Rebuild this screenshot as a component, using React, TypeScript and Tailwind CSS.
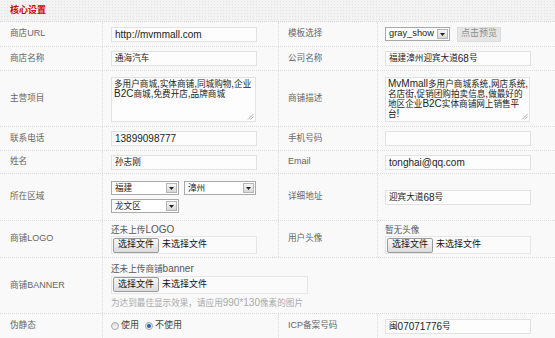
import React from "react";

const CJK = /([\u2000-\u206f\u3000-\u9fff\uff00-\uffef]+)/;

function M({ t }: { t: string }) {
  const parts = t.split(CJK);
  return (
    <>
      {parts.map((p, i) =>
        i % 2 === 1 ? (
          <span key={i} className="text-[8.6px]">
            {p}
          </span>
        ) : (
          <React.Fragment key={i}>{p}</React.Fragment>
        )
      )}
    </>
  );
}

function Label({ t, first }: { t: string; first?: boolean }) {
  return (
    <div
      className={
        "flex items-center text-[9px] text-[#666] " +
        (first ? "pl-[10px]" : "pl-[9px] border-l border-dotted border-[#dedede]")
      }
    >
      <span>
        <M t={t} />
      </span>
    </div>
  );
}

function Cell({ children, right, className }: { children?: React.ReactNode; right?: boolean; className?: string }) {
  return (
    <div
      className={
        "flex border-l border-dotted border-[#dedede] " +
        (right ? "pl-[7px] " : "pl-[8px] ") +
        (className ?? "items-center")
      }
    >
      {children}
    </div>
  );
}

function Input({ v }: { v?: string }) {
  return (
    <div className="flex h-[15px] w-[146px] items-center border border-[#e2e2e2] bg-[#fdfdfd] px-[3px] text-[10px] leading-[13px] text-[#222] whitespace-nowrap">
      {v ? <M t={v} /> : null}
    </div>
  );
}

function Grip() {
  return (
    <svg className="absolute bottom-[1px] right-[1px]" width="7" height="7" viewBox="0 0 7 7">
      <path d="M6.5 1 L1 6.5 M6.5 3.5 L3.5 6.5" stroke="#999" strokeWidth="0.8" />
    </svg>
  );
}

function Area({ lines }: { lines: string[] }) {
  return (
    <div className="relative h-[45px] w-[145px] overflow-hidden border border-[#e2e2e2] bg-[#fdfdfd] px-[2px] pt-[1px] text-[10px] leading-[10px] text-[#222] whitespace-nowrap">
      {lines.map((l, i) => (
        <div key={i}>
          <M t={l} />
        </div>
      ))}
      <Grip />
    </div>
  );
}

function Arrow() {
  return (
    <span className="absolute right-[1px] top-[1px] flex h-[10px] w-[11px] items-center justify-center border border-[#b5b5b5] bg-gradient-to-b from-[#f6f6f6] to-[#d8d8d8]">
      <svg width="5" height="3" viewBox="0 0 5 3">
        <path d="M0 0 H5 L2.5 3 Z" fill="#222" />
      </svg>
    </span>
  );
}

function Sel({ v, w }: { v: string; w: string }) {
  return (
    <div className={"relative flex h-[14px] items-center border border-[#a9a9a9] bg-white pl-[3px] text-[9.3px] text-[#222] whitespace-nowrap " + w}>
      <M t={v} />
      <Arrow />
    </div>
  );
}

function FileBox({ w }: { w: string }) {
  return (
    <div className={"flex h-[18px] items-center border border-[#e6e6e6] bg-[#fbfbfb] pl-[1px] " + w}>
      <span className="flex h-[15px] items-center rounded-[2px] border border-[#9a9a9a] bg-gradient-to-b from-[#f8f8f8] to-[#dcdcdc] px-[4px] text-[9px] text-[#111]">
        选择文件
      </span>
      <span className="ml-[3px] text-[9px] text-[#111]">未选择文件</span>
    </div>
  );
}

function Radio({ on }: { on?: boolean }) {
  return (
    <span className="flex h-[8px] w-[8px] items-center justify-center rounded-full border border-[#a8a8a8] bg-gradient-to-b from-[#dcdcdc] to-[#f8f8f8]">
      {on ? <span className="h-[4px] w-[4px] rounded-full bg-[#1f5fb5]" /> : null}
    </span>
  );
}

const ROW = "grid grid-cols-[102px_176px_99px_178px] border-b border-dotted border-[#dadada]";

export default function App() {
  return (
    <div className="h-[338px] w-[555px] overflow-hidden bg-[#f9f9f9] font-['Liberation_Sans','Noto_Sans_CJK_SC',sans-serif]">
      <div className="flex h-[22px] items-center border-b border-dotted border-[#d6d6d6] bg-[#f3f3f3] bg-[radial-gradient(circle,#e2e2e2_0.7px,transparent_0.9px)] bg-[length:3px_3px] pl-[10px]">
        <span className="text-[9px] font-bold text-[#d00000]">核心设置</span>
      </div>

      <div className={ROW + " h-[25px]"}>
        <Label t="商店URL" first />
        <Cell>
          <Input v="http://mvmmall.com" />
        </Cell>
        <Label t="模板选择" />
        <Cell right>
          <Sel v="gray_show" w="w-[65px]" />
          <span className="ml-[7px] flex h-[15px] w-[44px] items-center justify-center border border-[#dcdcdc] bg-[#e6e6e6] text-[9px] text-[#8c8c8c]">
            点击预览
          </span>
        </Cell>
      </div>

      <div className={ROW + " h-[24px]"}>
        <Label t="商店名称" first />
        <Cell>
          <Input v="通海汽车" />
        </Cell>
        <Label t="公司名称" />
        <Cell right>
          <Input v="福建漳州迎宾大道68号" />
        </Cell>
      </div>

      <div className={ROW + " h-[56px]"}>
        <Label t="主营项目" first />
        <Cell className="items-start pt-[6px]">
          <Area lines={["多用户商城,实体商铺,同城购物,企业", "B2C商城,免费开店,品牌商城"]} />
        </Cell>
        <Label t="商铺描述" />
        <Cell right className="items-start pt-[6px]">
          <Area
            lines={[
              "MvMmall多用户商城系统,网店系统,",
              "名店街,促销团购拍卖信息,做最好的",
              "地区企业B2C实体商铺网上销售平",
              "台!",
            ]}
          />
        </Cell>
      </div>

      <div className={ROW + " h-[24px]"}>
        <Label t="联系电话" first />
        <Cell>
          <Input v="13899098777" />
        </Cell>
        <Label t="手机号码" />
        <Cell right>
          <Input />
        </Cell>
      </div>

      <div className={ROW + " h-[23px]"}>
        <Label t="姓名" first />
        <Cell>
          <Input v="孙志刚" />
        </Cell>
        <Label t="Email" />
        <Cell right>
          <Input v="tonghai@qq.com" />
        </Cell>
      </div>

      <div className={ROW + " h-[47px]"}>
        <Label t="所在区域" first />
        <Cell className="flex-col justify-center gap-[4px]">
          <div className="flex gap-[5px]">
            <Sel v="福建" w="w-[68px]" />
            <Sel v="漳州" w="w-[72px]" />
          </div>
          <Sel v="龙文区" w="w-[68px]" />
        </Cell>
        <Label t="详细地址" />
        <Cell right>
          <Input v="迎宾大道68号" />
        </Cell>
      </div>

      <div className={ROW + " h-[37px]"}>
        <Label t="商铺LOGO" first />
        <Cell className="flex-col justify-center">
          <div className="text-[10px] leading-[11px] text-[#555]">
            <M t="还未上传LOGO" />
          </div>
          <FileBox w="w-[146px]" />
        </Cell>
        <Label t="用户头像" />
        <Cell right className="flex-col justify-center">
          <div className="text-[10px] leading-[11px] text-[#555]">
            <M t="暂无头像" />
          </div>
          <FileBox w="w-[146px]" />
        </Cell>
      </div>

      <div className="grid h-[56px] grid-cols-[102px_453px] border-b border-dotted border-[#dadada]">
        <Label t="商铺BANNER" first />
        <Cell className="flex-col justify-center">
          <div className="text-[10px] leading-[11px] text-[#555]">
            <M t="还未上传商铺banner" />
          </div>
          <div className="mt-[1px]">
            <FileBox w="w-[197px]" />
          </div>
          <div className="mt-[3px] text-[10px] leading-[11px] text-[#aaa]">
            <M t="为达到最佳显示效果，请应用990*130像素的图片" />
          </div>
        </Cell>
      </div>

      <div className="grid h-[24px] grid-cols-[102px_176px_99px_178px]">
        <Label t="伪静态" first />
        <Cell>
          <Radio />
          <span className="ml-[2px] text-[9px] text-[#444]">使用</span>
          <span className="ml-[6px]">
            <Radio on />
          </span>
          <span className="ml-[2px] text-[9px] text-[#444]">不使用</span>
        </Cell>
        <Label t="ICP备案号码" />
        <Cell right>
          <Input v="闽07071776号" />
        </Cell>
      </div>
    </div>
  );
}
